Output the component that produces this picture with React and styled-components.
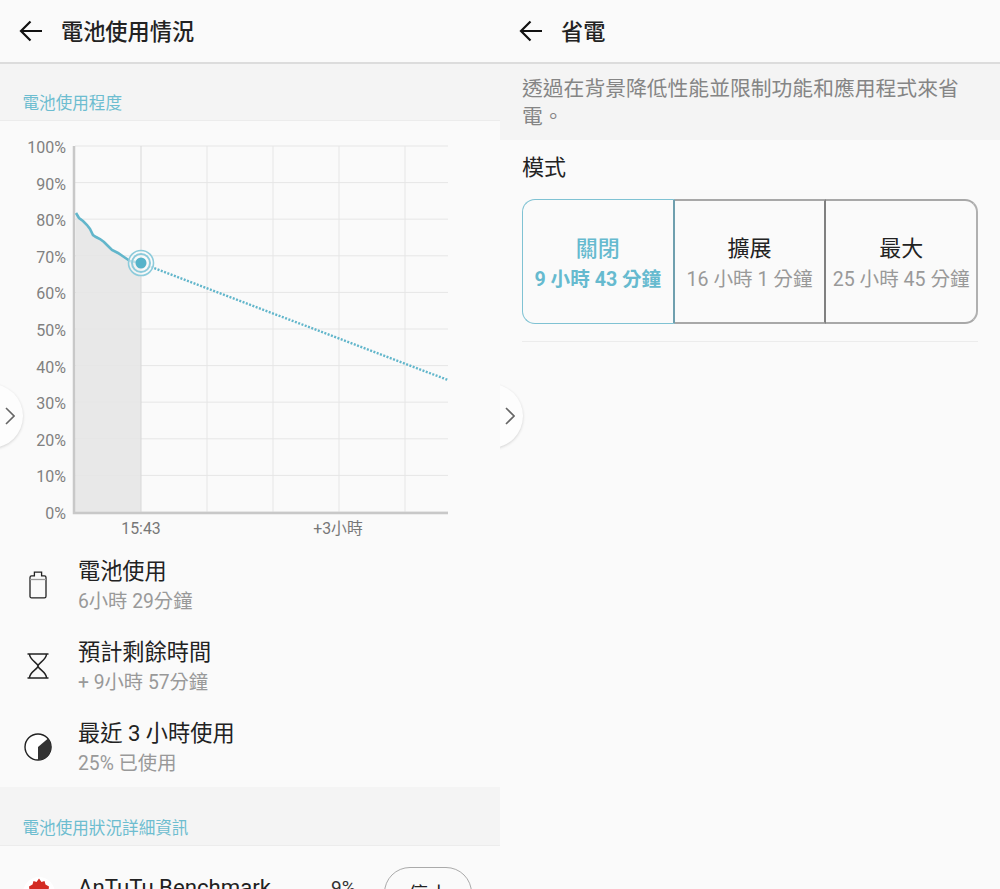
import React from 'react'
import styled, { createGlobalStyle } from 'styled-components'

const GlobalStyle = createGlobalStyle`
    html, body {
        margin: 0;
        padding: 0;
        background: #fafafa;
        font-family: Roboto, "Noto Sans CJK TC", sans-serif;
    }
`

const Screen = styled.div`
    display: flex;
    width: 1000px;
    height: 889px;
    overflow: hidden;
`

const Panel = styled.div`
    position: relative;
    display: flex;
    flex-direction: column;
    width: 500px;
    height: 889px;
    overflow: hidden;
    background: #fafafa;
`

const Header = styled.div`
    display: flex;
    align-items: center;
    flex: none;
    gap: 18px;
    height: 62px;
    padding-left: 19px;
    border-bottom: 2px solid #dcdcdc;
    box-sizing: content-box;
`

const Title = styled.h1`
    margin: 0 0 3px;
    font-size: 22.2px;
    font-weight: 500;
    color: #222;
`

const Band = styled.div`
    display: flex;
    align-items: flex-end;
    flex: none;
    height: ${props => props.$height}px;
    padding: 0 22.5px 4px;
    box-sizing: border-box;
    background: #f4f4f4;
    border-bottom: 1px solid #ececec;
    font-size: 16.6px;
    line-height: 24px;
    color: #6dbdd0;
`

const ChartWrap = styled.div`
    flex: none;
    height: 420px;
`

const Stats = styled.div`
    display: flex;
    flex-direction: column;
    flex: none;
    height: 246px;
    padding-top: 3px;
    box-sizing: border-box;
`

const Stat = styled.div`
    display: flex;
    align-items: center;
    height: 81px;
    flex: none;
`

const StatIcon = styled.div`
    display: flex;
    align-items: center;
    justify-content: center;
    width: 30px;
    margin: 0 25px 0 23px;
    flex: none;
`

const StatText = styled.div`
    display: flex;
    flex-direction: column;
    gap: 2px;
    margin-top: 3px;
`

const StatTitle = styled.div`
    font-size: 22.2px;
    line-height: 28px;
    margin-bottom: 0;
    color: #222;
`

const StatSub = styled.div`
    font-size: 19.3px;
    line-height: 28px;
    margin-top: 1px;
    margin-bottom: -1px;
    color: #999;
`

const AppRow = styled.div`
    display: flex;
    align-items: flex-start;
    flex: none;
    height: 60px;
    padding: 21px 0 0 23px;
    box-sizing: border-box;
`

const AppIcon = styled.div`
    display: flex;
    justify-content: center;
    flex: none;
    width: 32px;
    height: 32px;
    margin-top: 10px;
    margin-right: 23px;
`

const AppName = styled.div`
    width: 253px;
    flex: none;
    margin-top: 3px;
    font-size: 22.2px;
    line-height: 34px;
    color: #222;
`

const AppPercent = styled.div`
    width: 53px;
    flex: none;
    margin-top: 4px;
    font-size: 19px;
    line-height: 34px;
    color: #333;
`

const StopButton = styled.button`
    width: 88px;
    height: 52px;
    flex: none;
    padding: 0;
    border: 1.5px solid #aaa;
    border-radius: 26px;
    background: transparent;
    font-family: inherit;
    font-size: 20px;
    color: #222;
`

const Description = styled.div`
    flex: none;
    height: 76px;
    padding: 11px 22px 0;
    box-sizing: border-box;
    background: #f4f4f4;
    font-size: 20.8px;
    line-height: 28px;
    color: #858585;
`

const ModeLabel = styled.div`
    flex: none;
    height: 59px;
    padding-left: 22px;
    font-size: 22px;
    line-height: 56px;
    color: #222;
`

const Segments = styled.div`
    display: flex;
    flex: none;
    width: 456px;
    height: 125px;
    margin-left: 22px;
    box-sizing: border-box;
`

const Segment = styled.div`
    display: flex;
    flex-direction: column;
    align-items: center;
    justify-content: center;
    flex: 1;
    min-width: 0;
    box-sizing: border-box;
    border: ${props => (props.$active ? '1px solid #7fc2d3' : '2px solid #a8a8a8')};
    border-left: ${props => (props.$first ? '1px solid #7fc2d3' : 'none')};
    border-right: ${props => (props.$last ? '2px solid #b0b0b0' : `2px solid ${props.$rightColor}`)};
    border-radius: ${props => (props.$first ? '13px 0 0 13px' : props.$last ? '0 13px 13px 0' : '0')};
    padding-top: 6px;
`

const SegmentTitle = styled.div`
    font-size: 22px;
    line-height: 30px;
    font-weight: ${props => (props.$active ? 500 : 400)};
    color: ${props => (props.$active ? '#66bacf' : '#222')};
`

const SegmentSub = styled.div`
    font-size: 19.6px;
    line-height: 31px;
    white-space: nowrap;
    font-weight: ${props => (props.$active ? 700 : 400)};
    color: ${props => (props.$active ? '#66bacf' : '#999')};
`

const Divider = styled.div`
    flex: none;
    width: 456px;
    height: 1px;
    margin: 17px 0 0 22px;
    background: #ececec;
`

const Handle = styled.div`
    position: absolute;
    top: 384px;
    left: ${props => props.$left}px;
    display: flex;
    align-items: center;
    justify-content: flex-end;
    width: 64px;
    height: 64px;
    padding-right: 8px;
    box-sizing: border-box;
    border-radius: 50%;
    background: #fdfdfd;
    box-shadow: 0 1px 3px rgba(0, 0, 0, 0.16);
`

const BackArrow = () => (
    <svg width="24" height="24" viewBox="0 0 24 24" fill="none" stroke="#111" strokeWidth="2.2">
        <path d="M23 12H2M11.5 2.5L2 12l9.5 9.5" />
    </svg>
)

const Chevron = () => (
    <svg width="10" height="18" viewBox="0 0 10 18" fill="none" stroke="#666" strokeWidth="1.6">
        <path d="M1 1l8 8-8 8" />
    </svg>
)

const BatteryIcon = () => (
    <svg width="18" height="28" viewBox="0 0 18 28" fill="none" stroke="#222" strokeWidth="1.3">
        <path d="M1 6.500c0-1 .6-1.600 1.600-1.600h2.800V1.200h7.200v3.700h2.800c1 0 1.600.6 1.600 1.600v18.700c0 1-.6 1.600-1.600 1.600H2.600c-1 0-1.600-.6-1.600-1.600z" />
        <path d="M1 8.500h16" stroke="#999" />
    </svg>
)

const HourglassIcon = () => (
    <svg width="22" height="26" viewBox="0 0 22 26" fill="none" stroke="#222" strokeWidth="1.5">
        <path d="M0.500 1h21M0.500 25h21M2.500 1c0 6 8.500 9 8.500 12 0 3-8.500 6-8.500 12M19.500 1c0 6-8.500 9-8.500 12 0 3 8.500 6 8.500 12" />
    </svg>
)

const UsageIcon = () => (
    <svg width="28" height="28" viewBox="0 0 28 28">
        <circle cx="14" cy="14" r="13" fill="#fff" stroke="#222" strokeWidth="1.4" />
        <path d="M14 27V14L24 5.500A13 13 0 0 1 14 27z" fill="#333" />
    </svg>
)

const AntutuIcon = () => (
    <svg width="32" height="32" viewBox="0 0 32 32">
        <circle cx="16" cy="16" r="16" fill="#fff" />
        <path d="M16 1.500l2.500 3.500 3-1 1 3.500 3.500 2-.5 4 1.500 8H5l1.500-8-.5-4 3.500-2 1-3.500 3 1z" fill="#d32a22" />
    </svg>
)

const yTicks = [100, 90, 80, 70, 60, 50, 40, 30, 20, 10, 0]
const xGrid = [141, 207, 273, 339, 405]
const chartTop = 25
const tickStep = 36.6
const tickY = i => chartTop + i * tickStep

// chart svg starts at page y=121
const curve = 'M76 92 L79 97 L83 100 L87 104 L90 108 L93 114 L96 116 L100 118 L104 121 L108 125 L112 129 L118 132 L124 136 L130 140 L141 142'

const UsageChart = () => (
    <svg width="500" height="420" viewBox="0 0 500 420" style={{ display: 'block' }}>
        <path d={`${curve} L141 ${tickY(10)} L75 ${tickY(10)} Z`} fill="#e8e8e8" />
        {yTicks.map((t, i) => (
            <g key={t}>
                <line x1="75" x2="448" y1={tickY(i)} y2={tickY(i)} stroke="#e6e6e6" strokeWidth="1" />
                <text x="66" y={tickY(i) + 7} textAnchor="end" fontSize="16" fill="#808080">{t}%</text>
            </g>
        ))}
        {xGrid.map(x => (
            <line key={x} x1={x} x2={x} y1={chartTop} y2={tickY(10)} stroke={x === 141 ? '#d8d8d8' : '#e6e6e6'} strokeWidth="1" />
        ))}
        <path d={`M74 ${chartTop}V${tickY(10) + 1}H448`} fill="none" stroke="#c8c8c8" strokeWidth="2.500" />
        <path d={curve} fill="none" stroke="#62b6cb" strokeWidth="2.600" />
        <line x1="151" y1="146" x2="448" y2="259" stroke="#62b6cb" strokeWidth="2.400" strokeDasharray="2 1.500" />
        <circle cx="141" cy="142" r="12.500" fill="#fafafa" fillOpacity="0.6" stroke="#8ccbdb" strokeWidth="1.600" />
        <circle cx="141" cy="142" r="9" fill="none" stroke="#8ccbdb" strokeWidth="2" />
        <circle cx="141" cy="142" r="5.500" fill="#55b3ca" />
        <text x="141" y="413" textAnchor="middle" fontSize="15.800" fill="#777">15:43</text>
        <text x="338" y="413" textAnchor="middle" fontSize="15.800" fill="#777">+3小時</text>
    </svg>
)

const stats = [
    { icon: <BatteryIcon />, title: '電池使用', sub: '6小時 29分鐘' },
    { icon: <HourglassIcon />, title: '預計剩餘時間', sub: '+ 9小時 57分鐘' },
    { icon: <UsageIcon />, title: '最近 3 小時使用', sub: '25% 已使用' },
]

const modes = [
    { title: '關閉', sub: '9 小時 43 分鐘', active: true, first: true, rightColor: '#6f9fae' },
    { title: '擴展', sub: '16 小時 1 分鐘', rightColor: '#808080' },
    { title: '最大', sub: '25 小時 45 分鐘', last: true },
]

const App = () => (
    <Screen>
        <GlobalStyle />
        <Panel>
            <Header>
                <BackArrow />
                <Title>電池使用情況</Title>
            </Header>
            <Band $height={57}>電池使用程度</Band>
            <ChartWrap>
                <UsageChart />
            </ChartWrap>
            <Stats>
                {stats.map(stat => (
                    <Stat key={stat.title}>
                        <StatIcon>{stat.icon}</StatIcon>
                        <StatText>
                            <StatTitle>{stat.title}</StatTitle>
                            <StatSub>{stat.sub}</StatSub>
                        </StatText>
                    </Stat>
                ))}
            </Stats>
            <Band $height={59}>電池使用狀況詳細資訊</Band>
            <AppRow>
                <AppIcon><AntutuIcon /></AppIcon>
                <AppName>AnTuTu Benchmark</AppName>
                <AppPercent>9%</AppPercent>
                <StopButton>停止</StopButton>
            </AppRow>
            <Handle $left={-41}><Chevron /></Handle>
        </Panel>
        <Panel>
            <Header>
                <BackArrow />
                <Title>省電</Title>
            </Header>
            <Description>透過在背景降低性能並限制功能和應用程式來省電。</Description>
            <ModeLabel>模式</ModeLabel>
            <Segments>
                {modes.map(mode => (
                    <Segment key={mode.title} $active={mode.active} $first={mode.first} $last={mode.last} $rightColor={mode.rightColor}>
                        <SegmentTitle $active={mode.active}>{mode.title}</SegmentTitle>
                        <SegmentSub $active={mode.active}>{mode.sub}</SegmentSub>
                    </Segment>
                ))}
            </Segments>
            <Divider />
            <Handle $left={-41}><Chevron /></Handle>
        </Panel>
    </Screen>
)

export default App
